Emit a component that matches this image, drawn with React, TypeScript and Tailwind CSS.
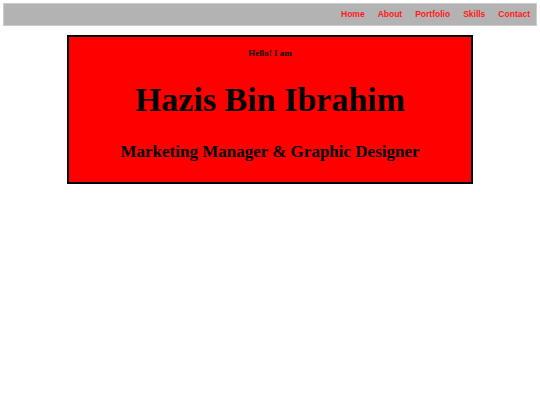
export default function App() {
  const links = ['Home', 'About', 'Portfolio', 'Skills', 'Contact'];

  return (
    <div className="min-h-[405px] bg-white p-[3px]">
      {/* barra de navegacion */}
      <nav className="flex h-[23px] items-center justify-end gap-[13px] border border-[#cccccc] bg-[#b3b3b3] pr-[6px]">
        {links.map((l) => (
          <a
            key={l}
            href="#"
            className="text-[8.5px] font-bold text-[#ff1a1a] [font-family:'Liberation_Sans',Arial,sans-serif]"
          >
            {l}
          </a>
        ))}
      </nav>

      {/* tarjeta principal */}
      <div className="mx-auto mt-[9px] flex h-[149px] w-[406px] flex-col items-center border-2 border-black bg-[#ff0000] text-black [font-family:'Liberation_Serif','Times_New_Roman',serif]">
        <p className="mt-[12px] text-[9px] font-bold leading-none">Hello! I am</p>
        <h1 className="mt-[25px] text-[34px] font-bold leading-none">Hazis Bin Ibrahim</h1>
        <h2 className="mt-[26px] text-[17px] font-bold leading-none">Marketing Manager &amp; Graphic Designer</h2>
      </div>
    </div>
  );
}
